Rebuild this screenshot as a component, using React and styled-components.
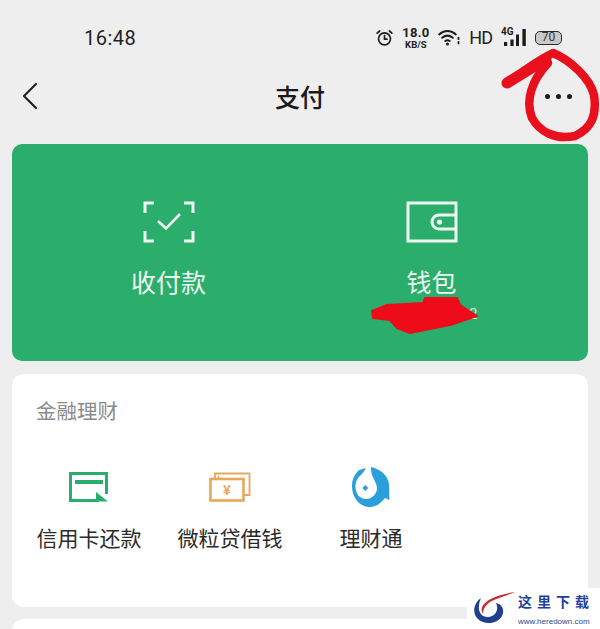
import React from "react";
import { styled, createGlobalStyle } from "styled-components";

const CJK = `"Noto Sans CJK SC", "Noto Sans", sans-serif`;

const GlobalStyle = createGlobalStyle`
  html, body {
    margin: 0;
    padding: 0;
    background: #eeeeee;
  }
`;

function AlarmIcon() {
  return (
    <svg width="17" height="17" viewBox="0 0 17 17" fill="none" stroke="#1c1c1c" strokeWidth="1.7" strokeLinecap="round">
      <circle cx="8.5" cy="9.8" r="6" />
      <path d="M8.5 6.6V10.2H11" />
      <path d="M1.2 4.2L3.6 2M15.8 4.2L13.4 2" />
    </svg>
  );
}

function WifiIcon() {
  return (
    <svg width="22" height="17" viewBox="0 0 22 17" fill="none" stroke="#1c1c1c" strokeWidth="2" strokeLinecap="round">
      <path d="M1.2 5.4C6 1 13 1 17.8 5.4" />
      <path d="M4.2 8.8C7.4 6.2 11.6 6.2 14.8 8.8" />
      <path d="M7.2 12C8.6 11 10.4 11 11.8 12" />
      <circle cx="9.5" cy="15" r="1.5" fill="#1c1c1c" stroke="none" />
      <path d="M20.5 8.6V10.2M20.5 12.8V14.4" strokeWidth="1.8" />
    </svg>
  );
}

function SignalBars() {
  return (
    <svg width="22" height="17" viewBox="0 0 22 17" fill="#1c1c1c">
      <rect x="0" y="13" width="3.2" height="4" />
      <rect x="6.4" y="10.5" width="3.2" height="6.5" />
      <rect x="12" y="5.5" width="3" height="11.5" />
      <rect x="18.4" y="0" width="3.4" height="17" />
    </svg>
  );
}

function ScanIcon() {
  return (
    <svg width="52" height="42" viewBox="0 0 52 42" fill="none" stroke="#eef8f2" strokeWidth="3">
      <path d="M11 2H2V12M41 2H50V12M2 30V40H11M50 30V40H41" />
      <path d="M15 20L23 27.5L37 13" strokeWidth="2.6" />
    </svg>
  );
}

function WalletIcon() {
  return (
    <svg width="52" height="42" viewBox="0 0 52 42" fill="none" stroke="#eef8f2" strokeWidth="3">
      <rect x="2" y="2" width="48" height="38" />
      <path d="M49 14H33A7 7 0 0 0 33 28H49" />
      <circle cx="33.5" cy="21" r="2.6" fill="#eef8f2" stroke="none" />
    </svg>
  );
}

function CardIcon() {
  return (
    <svg width="40" height="30" viewBox="0 0 40 30" fill="none">
      <path d="M37.5 22V1.5H1.5V28.5H30" stroke="#2bae6b" strokeWidth="3" />
      <rect x="6" y="8" width="28" height="4" fill="#2bae6b" />
      <path d="M27 20L39 29.5H27Z" fill="#2bae6b" />
    </svg>
  );
}

function LoanIcon() {
  return (
    <svg width="42" height="30" viewBox="0 0 42 30" fill="none" stroke="#e8a85c">
      <path d="M6 6V1.5H40.5V23H35" strokeWidth="1.8" />
      <path d="M9.5 6V3.8" strokeWidth="1.4" />
      <rect x="1.5" y="7" width="33" height="21.5" strokeWidth="2.6" />
      <text x="18" y="23" fontSize="14" fontWeight="700" fill="#e8a85c" stroke="none" textAnchor="middle" fontFamily={`"Liberation Sans", sans-serif`}>¥</text>
    </svg>
  );
}

function FundIcon() {
  return (
    <svg width="38" height="40" viewBox="0 0 38 40" fill="#2a9fdc">
      <path d="M19 0C29 2 36 9 37 17C37.5 22 37 27 37.5 33L33 31C29 36 24 40 18 40C7 40 0 30 0 19C0 12 3 7 7 3L14 1C13 3 11.5 5 9.5 7.5C6 10 3.5 14 3.5 20C3.5 27 8 32 14 32C20 32 25 27 25 21C25 17 22 13 20 8C19 5 19 2 19 0Z" />
      <path d="M13.3 18L16.3 21L13.3 24L10.3 21Z" />
    </svg>
  );
}

function SiteMark() {
  return (
    <svg width="42" height="32" viewBox="0 0 42 32" fill="none">
      <path d="M8 6C1 11 -1 20 4 26C10 33 24 33 29 24C32 18 29 12 23 11C26 17 23 24 16 25C9 26 5 20 6 14C6 11 7 8 8 6Z" fill="#1f3f8f" />
      <path d="M42 0C30 2 17 5 11 12C8 15 8 19 10 22C10 16 14 11 21 8C28 5 35 3 42 0Z" fill="#c6303a" />
    </svg>
  );
}

function ScribbleOverlay() {
  return (
    <Scribbles viewBox="0 0 600 629" width="600" height="629" fill="none">
      <path d="M507 83C522 72 538 60 553 53C570 60 590 78 594 95C597 115 592 128 575 136C555 140 540 132 532 118C525 100 532 80 548 63" stroke="#e8101c" strokeWidth="8.5" strokeLinecap="round" strokeLinejoin="round" />
      <path d="M507 83L546 59" stroke="#e8101c" strokeWidth="11" strokeLinecap="round" />
      <path d="M372 311L387 305L423 303L425 298L457 298L460 305L477 316L450 325L410 333L397 328L390 320L373 318Z" fill="#ee0c1a" stroke="#ee0c1a" strokeWidth="2" strokeLinejoin="round" />
    </Scribbles>
  );
}

export default function App() {
  return (
    <Page>
      <GlobalStyle />
      <StatusBar>
        <Clock>16:48</Clock>
        <StatusIcons>
          <AlarmIcon />
          <Speed>
            <SpeedValue>18.0</SpeedValue>
            <SpeedUnit>KB/S</SpeedUnit>
          </Speed>
          <WifiIcon />
          <Hd>HD</Hd>
          <Signal>
            <SignalLabel>4G</SignalLabel>
            <SignalBars />
          </Signal>
          <Battery>70</Battery>
        </StatusIcons>
      </StatusBar>

      <NavBar>
        <BackIcon width="18" height="28" viewBox="0 0 18 28" fill="none" stroke="#222" strokeWidth="2.2" strokeLinecap="round" strokeLinejoin="round">
          <path d="M15 2L3 14L15 26" />
        </BackIcon>
        <NavTitle>支付</NavTitle>
        <MoreDots>
          <i />
          <i />
          <i />
        </MoreDots>
      </NavBar>

      <GreenCard>
        <GreenAction>
          <ScanIcon />
          <GreenLabel>收付款</GreenLabel>
        </GreenAction>
        <GreenAction>
          <WalletIcon />
          <GreenLabel>钱包</GreenLabel>
        </GreenAction>
      </GreenCard>

      <ServiceCard>
        <SectionTitle>金融理财</SectionTitle>
        <ServiceRow>
          <Service>
            <ServiceIcon>
              <CardIcon />
            </ServiceIcon>
            <ServiceLabel>信用卡还款</ServiceLabel>
          </Service>
          <Service>
            <ServiceIcon>
              <LoanIcon />
            </ServiceIcon>
            <ServiceLabel>微粒贷借钱</ServiceLabel>
          </Service>
          <Service>
            <ServiceIcon>
              <FundIcon />
            </ServiceIcon>
            <ServiceLabel>理财通</ServiceLabel>
          </Service>
        </ServiceRow>
      </ServiceCard>

      <NextCard />

      <Watermark>
        <SiteMark />
        <WatermarkText>
          <WatermarkName>这里下载</WatermarkName>
          <WatermarkUrl>www.heredown.com</WatermarkUrl>
        </WatermarkText>
      </Watermark>
      <BalanceRemnant>2</BalanceRemnant>
      <ScribbleOverlay />
    </Page>
  );
}

const Page = styled.div`
  position: relative;
  width: 600px;
  height: 629px;
  overflow: hidden;
  background: #eeeeee;
  font-family: ${CJK};
`;

const StatusBar = styled.div`
  display: flex;
  align-items: center;
  justify-content: space-between;
  height: 37px;
  padding: 19px 38px 0 84px;
`;

const Clock = styled.div`
  font-family: "Roboto", sans-serif;
  font-size: 20px;
  color: #222;
  letter-spacing: 0.5px;
`;

const StatusIcons = styled.div`
  display: flex;
  align-items: center;
  gap: 9px;
`;

const Speed = styled.div`
  display: flex;
  flex-direction: column;
  align-items: center;
  width: 27px;
  font-family: "Roboto", sans-serif;
  font-weight: 700;
  color: #222;
`;

const SpeedValue = styled.span`
  font-size: 13px;
  line-height: 14px;
  letter-spacing: 0.3px;
`;

const SpeedUnit = styled.span`
  font-size: 9.5px;
  line-height: 10px;
`;

const Hd = styled.span`
  font-family: "Roboto", sans-serif;
  font-size: 18px;
  line-height: 20px;
  letter-spacing: -1px;
  color: #222;
`;

const Signal = styled.div`
  position: relative;
  display: flex;
  justify-content: flex-end;
  width: 25px;
`;

const SignalLabel = styled.span`
  position: absolute;
  left: 0;
  top: -2px;
  font-family: "Roboto", sans-serif;
  font-size: 10px;
  line-height: 10px;
  font-weight: 700;
  color: #222;
`;

const Battery = styled.div`
  width: 27px;
  height: 14px;
  box-sizing: border-box;
  border: 1.5px solid #2a2a2a;
  border-radius: 5px;
  background: #c9c9c9;
  font-family: "Roboto", sans-serif;
  font-size: 12px;
  line-height: 11px;
  text-align: center;
  color: #333;
`;

const NavBar = styled.div`
  display: grid;
  grid-template-columns: 1fr auto 1fr;
  align-items: center;
  height: 80px;
  padding: 0 28px;
`;

const BackIcon = styled.svg`
  margin-left: -7px;
`;

const NavTitle = styled.h1`
  margin: 0;
  font-size: 25px;
  font-weight: 500;
  color: #1a1a1a;
`;

const MoreDots = styled.div`
  display: flex;
  justify-content: flex-end;
  gap: 6px;

  i {
    width: 5px;
    height: 5px;
    border-radius: 50%;
    background: #1a1a1a;
  }
`;

const GreenCard = styled.section`
  display: grid;
  grid-template-columns: 1fr 1fr;
  height: 217px;
  margin: 8px 12px 0;
  border-radius: 10px;
  background: #2bad6b;
  padding: 0 25px;
  box-sizing: border-box;
`;

const GreenAction = styled.div`
  display: flex;
  flex-direction: column;
  align-items: center;
  padding-top: 57px;
  gap: 20px;
`;

const GreenLabel = styled.span`
  font-size: 25px;
  line-height: 36px;
  color: #eef8f2;
`;

const BalanceRemnant = styled.span`
  position: absolute;
  left: 469px;
  top: 305px;
  font-family: "Roboto", sans-serif;
  font-size: 15px;
  line-height: 18px;
  color: #d5efe0;
`;

const ServiceCard = styled.section`
  height: 233px;
  margin: 13px 12px 0;
  border-radius: 12px;
  background: #ffffff;
  padding: 23px 24px 0;
  box-sizing: border-box;
`;

const SectionTitle = styled.div`
  font-size: 20.5px;
  line-height: 27px;
  color: #8a8a8a;
`;

const ServiceRow = styled.div`
  display: grid;
  grid-template-columns: repeat(3, 141px);
  margin: 44px 0 0 -17.5px;
`;

const Service = styled.div`
  display: flex;
  flex-direction: column;
  align-items: center;
  gap: 15px;
`;

const ServiceIcon = styled.div`
  display: flex;
  align-items: center;
  justify-content: center;
  height: 38px;
`;

const ServiceLabel = styled.span`
  font-size: 21px;
  line-height: 32px;
  color: #2a2a2a;
`;

const NextCard = styled.div`
  height: 40px;
  margin: 12px 12px 0;
  border-radius: 12px;
  background: #ffffff;
`;

const Watermark = styled.div`
  position: absolute;
  right: 0;
  bottom: 0;
  display: flex;
  align-items: flex-start;
  gap: 3px;
  width: 133px;
  height: 41px;
  padding: 4px 0 0 6px;
  box-sizing: border-box;
  background: #ffffff;
`;

const WatermarkText = styled.div`
  display: flex;
  flex-direction: column;
  gap: 7px;
  white-space: nowrap;
`;

const WatermarkName = styled.span`
  font-size: 14px;
  line-height: 18px;
  font-weight: 700;
  letter-spacing: 5px;
  color: #22409a;
`;

const WatermarkUrl = styled.span`
  font-family: "Liberation Sans", sans-serif;
  font-size: 8px;
  line-height: 9px;
  color: #2b4a8f;
`;

const Scribbles = styled.svg`
  position: absolute;
  inset: 0;
  pointer-events: none;
`;
